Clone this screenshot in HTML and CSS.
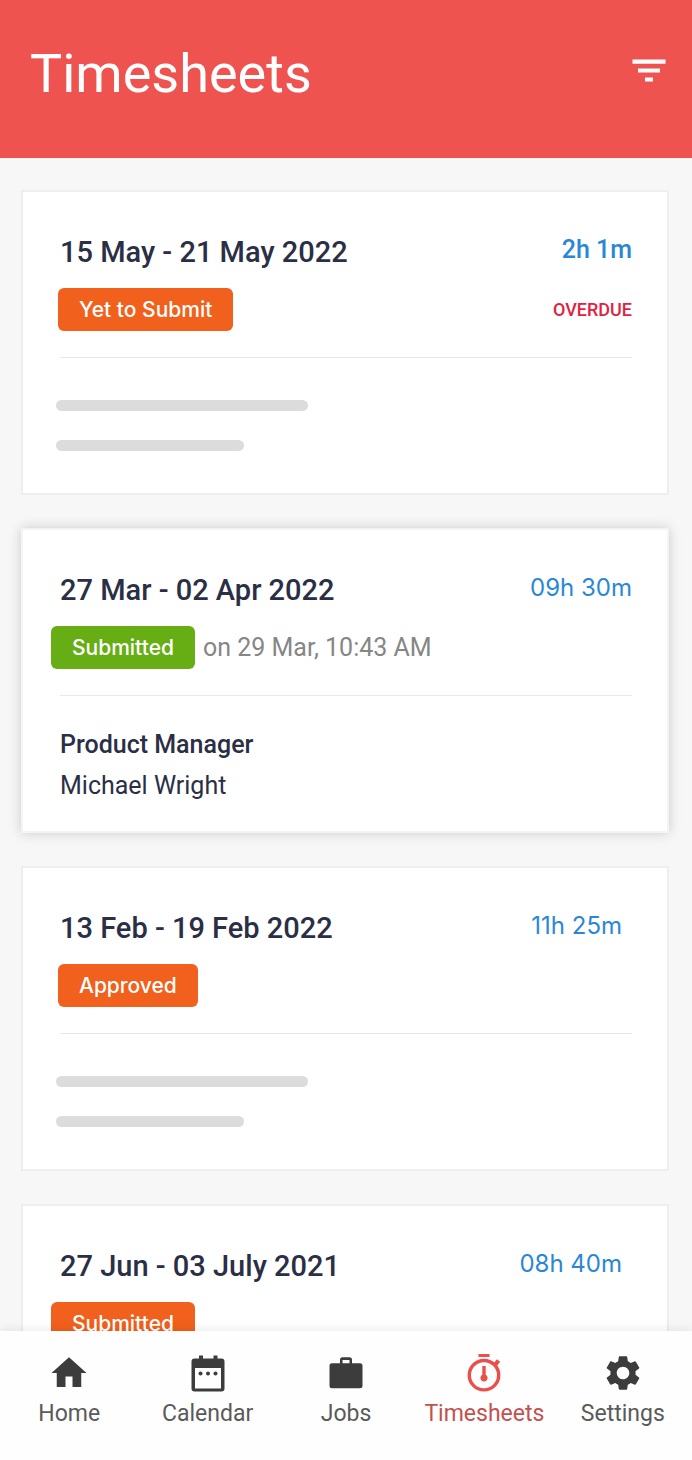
FILE: index.html
```html
<!DOCTYPE html>
<html lang="en">
<head>
<meta charset="utf-8">
<meta name="viewport" content="width=device-width, initial-scale=1">
<title>Timesheets</title>
<link rel="stylesheet" href="styles.css">
</head>
<body>
<div class="app">
  <header class="topbar">
    <h1 class="topbar-title">Timesheets</h1>
    <button class="filter" type="button" aria-label="Filter">
      <svg width="34" height="24" viewBox="0 0 34 24" fill="currentColor"><path d="M0.5 .5h33v4.300h-33zM6 9.500h22v4H6zM13 18.500h8v4h-8z"/></svg>
    </button>
  </header>

  <main class="list">
    <article class="card">
      <div class="card-head">
        <div class="row">
          <h2 class="period">15 May - 21 May 2022</h2>
          <span class="hours hours-medium">2h 1m</span>
        </div>
        <div class="status">
          <span class="badge badge-inset">Yet to Submit</span>
          <span class="overdue">OVERDUE</span>
        </div>
      </div>
      <div class="skeleton">
        <div class="bar bar-long"></div>
        <div class="bar bar-short"></div>
      </div>
    </article>

    <article class="card card-raised">
      <div class="card-head">
        <div class="row">
          <h2 class="period">27 Mar - 02 Apr 2022</h2>
          <span class="hours">09h 30m</span>
        </div>
        <div class="status">
          <span class="badge badge-green">Submitted</span>
          <span class="when">on 29 Mar, 10:43 AM</span>
        </div>
      </div>
      <div class="details">
        <p class="role">Product Manager</p>
        <p class="person">Michael Wright</p>
      </div>
    </article>

    <article class="card">
      <div class="card-head">
        <div class="row row-inset">
          <h2 class="period">13 Feb - 19 Feb 2022</h2>
          <span class="hours">11h 25m</span>
        </div>
        <div class="status">
          <span class="badge badge-inset">Approved</span>
        </div>
      </div>
      <div class="skeleton">
        <div class="bar bar-long"></div>
        <div class="bar bar-short"></div>
      </div>
    </article>

    <article class="card">
      <div class="card-head">
        <div class="row row-inset">
          <h2 class="period">27 Jun - 03 July 2021</h2>
          <span class="hours">08h 40m</span>
        </div>
        <div class="status">
          <span class="badge">Submitted</span>
        </div>
      </div>
    </article>
  </main>

  <nav class="tabs" aria-label="Main">
    <a class="tab" href="#home">
      <svg class="tab-icon" viewBox="0 0 24 24"><path d="M10 20v-6h4v6h5v-8h3L12 3 2 12h3v8z"/></svg>
      Home
    </a>
    <a class="tab" href="#calendar">
      <svg class="tab-icon" viewBox="0 0 42 42"><path fill-rule="evenodd" d="M12 3.500h4v3h10.500v-3h4v3h4a3 3 0 0 1 3 3v27a3 3 0 0 1-3 3h-27a3 3 0 0 1-3-3v-27a3 3 0 0 1 3-3H12zM8 16v20.500h26V16z"/><circle cx="13.500" cy="21.500" r="2"/><circle cx="21" cy="21.500" r="2"/><circle cx="28.500" cy="21.500" r="2"/></svg>
      Calendar
    </a>
    <a class="tab" href="#jobs">
      <svg class="tab-icon" viewBox="0 0 42 42"><path fill-rule="evenodd" d="M15 11.300V7.800a2.500 2.500 0 0 1 2.500-2.500h7A2.500 2.500 0 0 1 27 7.800v3.500h8a2.500 2.500 0 0 1 2.500 2.500v20a2.500 2.500 0 0 1-2.500 2.500H7a2.500 2.500 0 0 1-2.500-2.500v-20A2.500 2.500 0 0 1 7 11.300zM17.500 8v3.300h7V8z"/></svg>
      Jobs
    </a>
    <a class="tab tab-active" href="#timesheets" aria-current="page">
      <svg class="tab-icon" viewBox="0 0 42 42"><path d="M15.500 2h11v3h-11zM30.500 11.500l3.400-4.300 3.300 2.600-3.400 4.300z"/><circle cx="21" cy="23.200" r="14.700" fill="none" stroke="currentColor" stroke-width="3.400"/><path d="M19.300 14h3.400v8.800a3.600 3.600 0 1 1-3.400 0z"/></svg>
      Timesheets
    </a>
    <a class="tab" href="#settings">
      <svg class="tab-icon" viewBox="0 0 24 24"><path d="M19.140 12.940c.04-.3.060-.61.060-.94 0-.32-.02-.64-.07-.94l2.030-1.580a.49.490 0 0 0 .12-.61l-1.920-3.320a.488.488 0 0 0-.59-.22l-2.390.96c-.5-.38-1.030-.7-1.620-.94l-.36-2.540a.484.484 0 0 0-.48-.41h-3.840c-.24 0-.43.170-.47.410l-.36 2.540c-.59.240-1.130.570-1.620.94l-2.390-.96c-.22-.08-.47 0-.59.220L2.740 8.870c-.12.210-.08.470.12.610l2.030 1.580c-.05.300-.09.630-.09.940s.02.640.07.940l-2.030 1.580a.49.490 0 0 0-.12.610l1.920 3.320c.12.220.37.290.59.220l2.390-.96c.5.380 1.030.7 1.620.94l.36 2.540c.05.240.24.410.48.410h3.840c.24 0 .44-.17.470-.41l.36-2.540c.59-.24 1.130-.56 1.620-.94l2.390.96c.22.080.47 0 .59-.22l1.920-3.320c.12-.22.070-.47-.12-.61zM12 15.600A3.610 3.610 0 0 1 8.400 12c0-1.980 1.620-3.600 3.600-3.600s3.600 1.620 3.600 3.600-1.620 3.600-3.600 3.600z"/></svg>
      Settings
    </a>
  </nav>
</div>
</body>
</html>
```

FILE: styles.css
```css
* {
  box-sizing: border-box;
}

body,
h1,
h2,
p {
  margin: 0;
}

body {
  font-family: Roboto, "Liberation Sans", sans-serif;
  color: #2b2f45;
  background: #f7f7f7;
}

.app {
  display: flex;
  flex-direction: column;
  height: 100vh;
}

.topbar {
  display: flex;
  align-items: center;
  justify-content: space-between;
  flex: none;
  padding: 38px 26px 48px 30px;
  color: #fff;
  background: #ef5350;
}

.topbar-title {
  font-size: 54px;
  line-height: 72px;
  font-weight: 400;
}

.filter {
  display: flex;
  padding: 0 0 6px;
  border: 0;
  color: inherit;
  background: none;
}

.list {
  display: flex;
  flex-direction: column;
  gap: 33px;
  flex: 1;
  min-height: 0;
  padding: 32px 23px 32px 21px;
  overflow-y: auto;
  scrollbar-width: none;
}

.card {
  flex: none;
  min-height: 305px;
  padding: 42px 35px 24px 37px;
  border: 2px solid #eee;
  background: #fff;
}

.card-raised {
  border-color: #f4f4f4;
  box-shadow: 0 0 12px rgba(0, 0, 0, 0.18);
}

.card-head {
  display: flex;
  flex-direction: column;
  gap: 18px;
  padding-bottom: 26px;
  border-bottom: 1px solid #e8e8e8;
}

.row {
  display: flex;
  align-items: flex-start;
  justify-content: space-between;
}

.row-inset {
  padding-right: 10px;
}

.period {
  font-size: 29px;
  line-height: 36px;
  font-weight: 500;
}

.hours {
  font-family: Inter, Roboto, sans-serif;
  font-size: 24px;
  line-height: 32px;
  color: #2a87d6;
}

.hours-medium {
  font-family: Roboto, sans-serif;
  font-size: 25px;
  font-weight: 500;
}

.status {
  display: flex;
  align-items: center;
  gap: 8px;
}

.badge {
  margin-left: -9px;
  padding: 0 21px;
  border-radius: 6px;
  font-family: Inter, Roboto, sans-serif;
  font-size: 21px;
  line-height: 43px;
  font-weight: 500;
  color: #fff;
  background: #f1601c;
}

.badge-inset {
  margin-left: -2px;
}

.badge-green {
  background: #66ae14;
}

.overdue {
  margin-left: auto;
  font-size: 18px;
  font-weight: 500;
  color: #e0213f;
}

.when {
  font-size: 25px;
  color: #868686;
}

.skeleton {
  display: flex;
  flex-direction: column;
  gap: 29px;
  margin-left: -4px;
  padding-top: 42px;
}

.bar {
  height: 11px;
  border-radius: 6px;
  background: #dcdcdc;
}

.bar-long {
  width: 252px;
}

.bar-short {
  width: 188px;
}

.details {
  padding-top: 28px;
  font-size: 25px;
  line-height: 41px;
}

.role {
  font-weight: 500;
}

.tabs {
  position: relative;
  display: grid;
  grid-template-columns: repeat(5, 1fr);
  flex: none;
  padding: 21px 0 31px;
  background: #fefefe;
  box-shadow: 0 -2px 10px rgba(0, 0, 0, 0.08);
}

.tab {
  display: flex;
  flex-direction: column;
  align-items: center;
  gap: 5px;
  font-size: 23px;
  line-height: 30px;
  color: #5a5a5a;
  text-decoration: none;
}

.tab-icon {
  width: 42px;
  height: 42px;
  color: #3c3c3c;
  fill: currentColor;
}

.tab-active {
  color: #c4514f;
}

.tab-active .tab-icon {
  color: #ea4f4c;
}
```
